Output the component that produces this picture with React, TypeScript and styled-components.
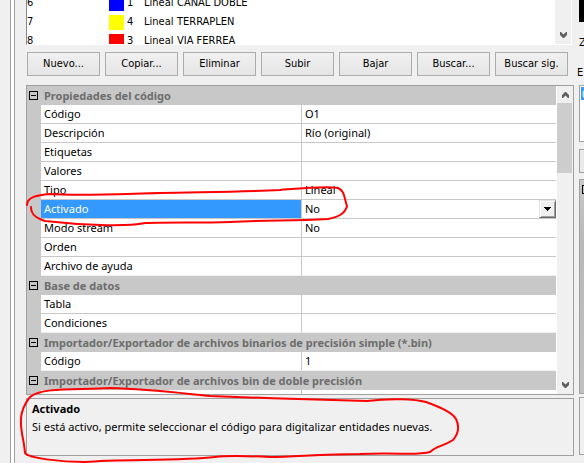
import React from "react";
import styled, { createGlobalStyle } from "styled-components";

const GlobalStyle = createGlobalStyle`
  * { box-sizing: border-box; }
  body {
    margin: 0;
    background: #f0f0f0;
    color: #000;
    font: 11px/18px "Noto Sans", "Open Sans", sans-serif;
    overflow: hidden;
  }
  button, select { font: inherit; color: inherit; }
`;

const dialogFont = `font: 11px/18px "DejaVu Sans Condensed", "DejaVu Sans", sans-serif;`;

const Window = styled.div`
  position: relative;
  display: flex;
  min-height: 100vh;
  overflow: hidden;
`;

const Splitter = styled.div`
  flex: none;
  width: 5px;
  margin-left: 10px;
  background: #fff;
  border: solid #a0a0a0;
  border-width: 0 1px;
`;

const Main = styled.main`
  flex: 1;
  min-width: 0;
  margin-left: 11px;
  display: flex;
  flex-direction: column;
`;

const CodeList = styled.section`
  height: 45px;
  margin-right: 2px;
  display: flex;
  overflow: hidden;
  background: #fff;
  border: solid #fff;
  border-width: 0 1px 1px 0;
  border-left: 1px solid #828790;
  ${dialogFont}
`;

const CodeTable = styled.table`
  flex: 1;
  height: 57px;
  margin-top: -6px;
  border-collapse: collapse;
  table-layout: fixed;
  td {
    height: 19px;
    padding: 0;
    line-height: 17px;
    vertical-align: top;
    white-space: nowrap;
  }
`;

const Col = styled.col<{ $w?: number }>`
  width: ${(p) => (p.$w ? `${p.$w}px` : "auto")};
`;

const Swatch = styled.span<{ $color: string }>`
  display: block;
  width: 15px;
  height: 15px;
  margin-top: 2px;
  background: ${(p) => p.$color};
`;

const ScrollTrack = styled.div<{ $atEnd?: boolean }>`
  flex: none;
  width: 16px;
  display: flex;
  flex-direction: column;
  justify-content: ${(p) => (p.$atEnd ? "flex-end" : "flex-start")};
  background: #f0f0f0;
`;

const ScrollButton = styled.button`
  flex: none;
  height: 17px;
  padding: 0;
  border: 0;
  background: transparent;
  display: grid;
  place-items: center;
`;

const Thumb = styled.div`
  width: 15px;
  height: 70px;
  background: #cdcdcd;
  margin-bottom: auto;
`;

const Toolbar = styled.div`
  display: flex;
  justify-content: space-between;
  margin: 7px 6px 9px 1px;
`;

const PushButton = styled.button`
  width: 73px;
  height: 24px;
  padding: 0;
  border: 1px solid #acacac;
  background: linear-gradient(#f0f0f0, #e5e5e5);
  white-space: nowrap;
  ${dialogFont}
`;

const PropertyPanel = styled.section`
  height: 310px;
  display: flex;
  overflow: hidden;
  border: 1px solid #a0a0a0;
`;

const GridView = styled.div`
  flex: 1;
  min-width: 0;
  overflow: hidden;
  background: #fff;
  border-right: 1px solid #fff;
`;

const Grid = styled.table`
  width: 100%;
  border-collapse: separate;
  border-spacing: 0;
  table-layout: fixed;
`;

const Gutter = styled.td`
  padding: 0;
  background: #c8c8c8;
`;

const Category = styled.th`
  height: 19px;
  padding: 0 3px;
  background: #c8c8c8;
  color: #6d6d6d;
  text-align: left;
  line-height: 18px;
  white-space: nowrap;
`;

const Toggle = styled.button`
  display: grid;
  place-items: center;
  width: 9px;
  height: 9px;
  margin-left: 2px;
  padding: 0;
  border: 1px solid #000;
  background: transparent;
  &::after { content: ""; width: 5px; height: 1px; background: #000; }
`;

const Name = styled.td<{ $selected?: boolean; $last?: boolean }>`
  height: 19px;
  padding: 0 3px;
  line-height: 18px;
  white-space: nowrap;
  color: ${(p) => (p.$selected ? "#fff" : "#000")};
  background: ${(p) => (p.$selected ? "#3399ff" : "#fff")};
  border-right: 1px solid #c8c8c8;
  border-bottom: 1px solid ${(p) => (p.$last ? "#f0f0f0" : "#c8c8c8")};
`;

const Value = styled.td<{ $last?: boolean }>`
  height: 19px;
  padding: 0 0 0 3px;
  line-height: 18px;
  white-space: nowrap;
  border-bottom: 1px solid ${(p) => (p.$last ? "#f0f0f0" : "#c8c8c8")};
`;

const ComboBox = styled.div`
  position: relative;
  height: 18px;
`;

const Select = styled.select`
  appearance: none;
  display: block;
  width: 100%;
  height: 18px;
  padding: 0;
  border: 0;
  outline: 0;
  background: transparent;
  line-height: 18px;
`;

const ComboArrow = styled.span`
  position: absolute;
  top: 0;
  right: 0;
  width: 17px;
  height: 18px;
  display: grid;
  place-items: center;
  pointer-events: none;
  background: #f0f0f0;
  border: 1px solid;
  border-color: #e3e3e3 #696969 #696969 #e3e3e3;
  box-shadow: inset 1px 1px #fff, inset -1px -1px #a0a0a0;
`;

const HelpPanel = styled.section`
  height: 58px;
  margin-top: 3px;
  padding: 1px 5px;
  border: 1px solid #a0a0a0;
  white-space: nowrap;
`;

const HelpTitle = styled.h2`
  margin: 0;
  font-size: 11px;
  line-height: 18px;
`;

const HelpText = styled.p`
  margin: 0;
  line-height: 18px;
`;

const Side = styled.aside`
  flex: none;
  width: 10px;
  padding-left: 5px;
  display: flex;
  flex-direction: column;
`;

const Preview = styled.div`
  height: 22px;
  background: #000;
`;

const SideLabel = styled.span<{ $outdent?: boolean }>`
  margin-top: 12px;
  margin-left: ${(p) => (p.$outdent ? -2 : 0)}px;
  height: 18px;
  white-space: nowrap;
  ${dialogFont}
`;

const SideBox = styled.div<{ $h: number; $gap: number; $bg?: string }>`
  flex: none;
  width: 40px;
  height: ${(p) => p.$h}px;
  margin-top: ${(p) => p.$gap}px;
  padding: 1px;
  border: 1px solid #a0a0a0;
  background: ${(p) => p.$bg ?? "transparent"};
`;

const SideItem = styled.div`
  height: 13px;
  padding-left: 1px;
  background: #3399ff;
  color: #fff;
  line-height: 13px;
`;

const SideToggle = styled(Toggle)`
  margin: 4px 0 0 1px;
`;

const Annotation = styled.svg`
  position: absolute;
  top: 0;
  left: 0;
  pointer-events: none;
`;

const Chevron = ({ up }: { up?: boolean }) => (
  <svg width="9" height="7" viewBox="0 0 9 7" fill="#606060" aria-hidden="true">
    <path d={up ? "M4 1h1l3 3v3H7L4.500 4.500 2 7H1V4z" : "M4 6h1l3-3V0H7L4.500 2.500 2 0H1v3z"} />
  </svg>
);

const codes = [
  { id: 6, color: "#0000ff", weight: 1, name: "CANAL DOBLE" },
  { id: 7, color: "#ffff00", weight: 4, name: "TERRAPLEN" },
  { id: 8, color: "#ff0000", weight: 3, name: "VIA FERREA" },
];

const actions = ["Nuevo...", "Copiar...", "Eliminar", "Subir", "Bajar", "Buscar...", "Buscar sig."];

const groups: { title: string; rows: [string, string][] }[] = [
  {
    title: "Propiedades del código",
    rows: [
      ["Código", "O1"],
      ["Descripción", "Río (original)"],
      ["Etiquetas", ""],
      ["Valores", ""],
      ["Tipo", "Lineal"],
      ["Activado", "No"],
      ["Modo stream", "No"],
      ["Orden", ""],
      ["Archivo de ayuda", ""],
    ],
  },
  { title: "Base de datos", rows: [["Tabla", ""], ["Condiciones", ""]] },
  {
    title: "Importador/Exportador de archivos binarios de precisión simple (*.bin)",
    rows: [["Código", "1"]],
  },
  { title: "Importador/Exportador de archivos bin de doble precisión", rows: [["", ""]] },
];

const ActiveSelect = () => (
  <ComboBox>
    <Select aria-labelledby="activado" defaultValue="No">
      <option>No</option>
      <option>Sí</option>
    </Select>
    <ComboArrow>
      <svg width="7" height="4" viewBox="0 0 7 4" aria-hidden="true" shapeRendering="crispEdges">
        <path d="M0 0h7v1H0zM1 1h5v1H1zM2 2h3v1H2zM3 3h1v1H3z" />
      </svg>
    </ComboArrow>
  </ComboBox>
);

export default function App() {
  return (
    <Window>
      <GlobalStyle />
      <Splitter />
      <Main>
        <CodeList>
          <CodeTable>
            <colgroup>
              <Col $w={82} />
              <Col $w={18} />
              <Col $w={17} />
              <Col $w={33} />
              <Col />
            </colgroup>
            <tbody>
              {codes.map((c) => (
                <tr key={c.id}>
                  <td>{c.id}</td>
                  <td><Swatch $color={c.color} /></td>
                  <td>{c.weight}</td>
                  <td>Lineal</td>
                  <td>{c.name}</td>
                </tr>
              ))}
            </tbody>
          </CodeTable>
          <ScrollTrack $atEnd>
            <ScrollButton aria-label="Bajar lista"><Chevron /></ScrollButton>
          </ScrollTrack>
        </CodeList>

        <Toolbar>
          {actions.map((label) => (
            <PushButton key={label}>{label}</PushButton>
          ))}
        </Toolbar>

        <PropertyPanel>
          <GridView>
            <Grid>
              <colgroup>
                <Col $w={14} />
                <Col $w={261} />
                <Col />
              </colgroup>
              {groups.map((g) => (
                <tbody key={g.title}>
                  <tr>
                    <Gutter><Toggle aria-label={`Contraer ${g.title}`} /></Gutter>
                    <Category colSpan={2}>{g.title}</Category>
                  </tr>
                  {g.rows.map(([name, value], i) => {
                    const last = i === g.rows.length - 1;
                    const selected = name === "Activado";
                    return (
                      <tr key={i}>
                        <Gutter />
                        <Name $selected={selected} $last={last} id={selected ? "activado" : undefined}>
                          {name}
                        </Name>
                        <Value $last={last}>{selected ? <ActiveSelect /> : value}</Value>
                      </tr>
                    );
                  })}
                </tbody>
              ))}
            </Grid>
          </GridView>
          <ScrollTrack>
            <ScrollButton aria-label="Subir propiedades"><Chevron up /></ScrollButton>
            <Thumb />
            <ScrollButton aria-label="Bajar propiedades"><Chevron /></ScrollButton>
          </ScrollTrack>
        </PropertyPanel>

        <HelpPanel>
          <HelpTitle>Activado</HelpTitle>
          <HelpText>
            Si está activo, permite seleccionar el código para digitalizar entidades nuevas.
          </HelpText>
        </HelpPanel>
      </Main>

      <Side>
        <Preview />
        <SideLabel>Z</SideLabel>
        <SideLabel $outdent>E</SideLabel>
        <SideBox $h={57} $gap={3} $bg="#fff">
          <SideItem>0</SideItem>
        </SideBox>
        <SideBox $h={24} $gap={7} $bg="#e9e9e9" />
        <SideBox $h={215} $gap={6} $bg="linear-gradient(#c8c8c8, #b8b8b8 30%, #c0c0c0)">
          <SideToggle aria-label="Contraer" />
        </SideBox>
        <SideBox $h={58} $gap={3} />
      </Side>

      <Annotation width="584" height="463" viewBox="0 0 584 463" fill="none" stroke="#f00" strokeWidth="2" strokeLinecap="round" aria-hidden="true">
        <path d="M27 205C27 197 37 195 50 194C80 196 120 194 160 193C200 192 240 192 280 190C305 188 325 186 338 188C345 191 344 198 347 206C345 214 338 217 328 219C290 221 270 220 230 222C200 223 170 222 145 223C125 227 80 225 45 221C35 218 31 214 31 207" />
        <path d="M25 453C24 439 20 431 21 418C22 407 27 401 30 397C42 387 75 390 110 388C150 389 180 393 210 396C260 398 330 400 367 401C390 398 415 399 426 402C440 407 453 413 456 419C460 427 458 434 453 440C444 446 436 446 430 452C415 456 400 452 360 454C320 454 295 457 270 457C250 456 230 455 215 457C180 461 120 459 85 462C60 462 28 458 25 453" />
      </Annotation>
    </Window>
  );
}
